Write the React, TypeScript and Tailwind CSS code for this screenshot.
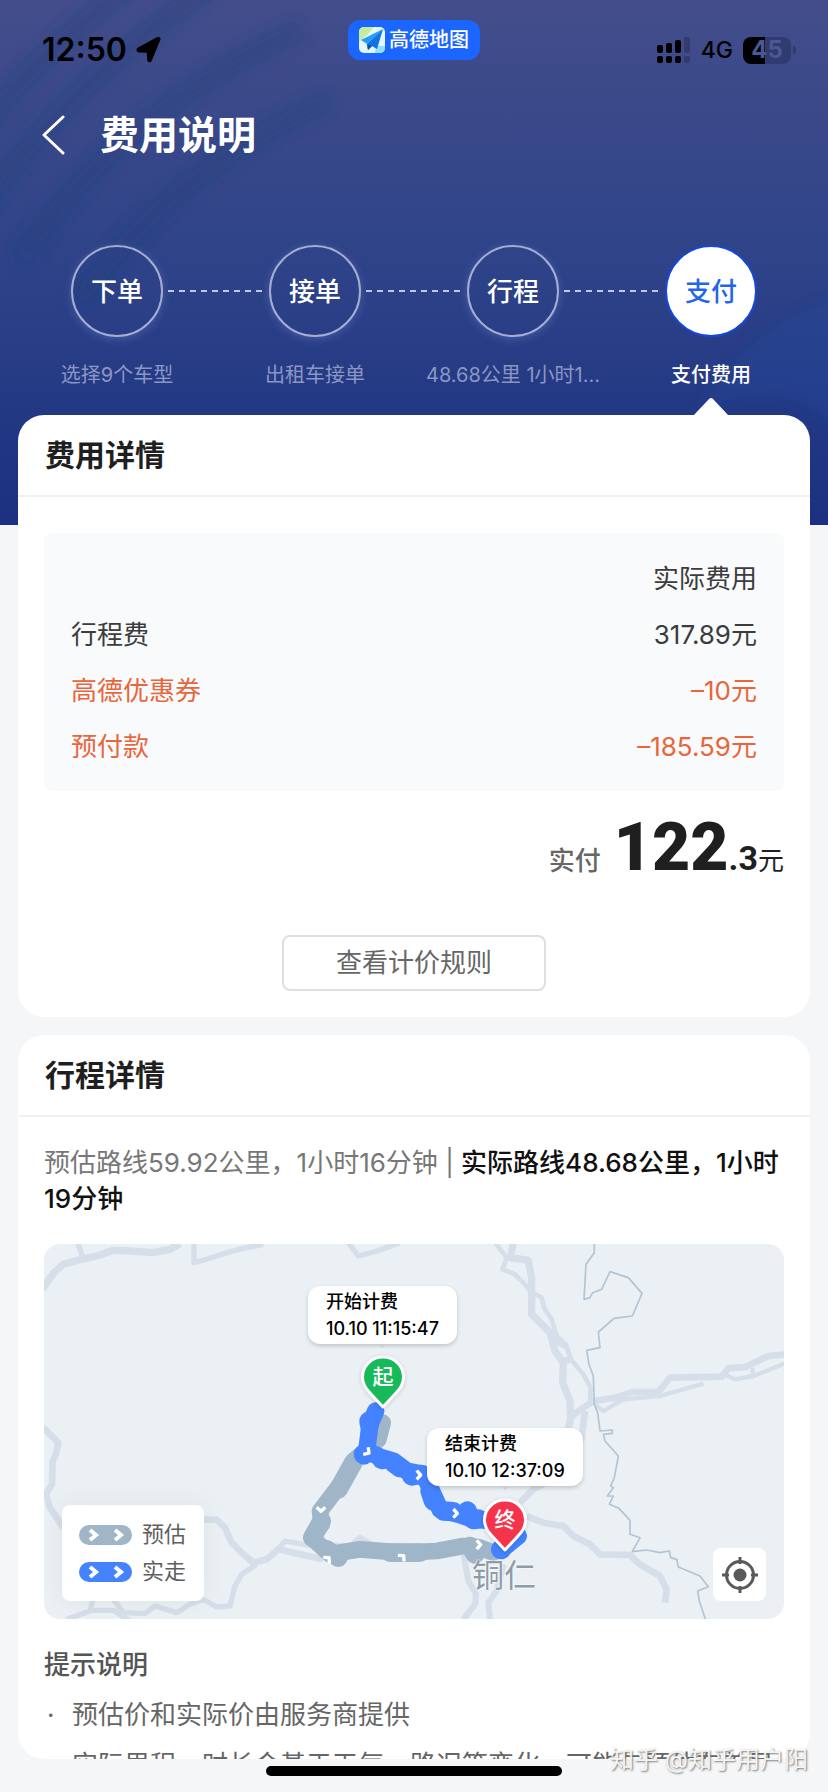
import type { ReactNode } from 'react';
import clsx from 'clsx';

const steps = [
  { name: '下单', note: '选择9个车型' },
  { name: '接单', note: '出租车接单' },
  { name: '行程', note: '48.68公里 1小时1...' },
  { name: '支付', note: '支付费用', active: true },
];

const fees = [
  { label: '行程费', amount: '317.89元' },
  { label: '高德优惠券', amount: '–10元', discount: true },
  { label: '预付款', amount: '–185.59元', discount: true },
];

const tips = ['预估价和实际价由服务商提供', '实际里程、时长会基于天气、路况等变化，可能与预估有差异'];

function StatusBar() {
  return (
    <div className="grid h-20 shrink-0 grid-cols-3 items-center px-8 text-black">
      <div className="flex items-center gap-2 pl-[10px] pt-5">
        <span className="text-[32px] font-semibold leading-8">12:50</span>
        <svg className="size-[26px]" viewBox="0 0 26 26" aria-hidden="true">
          <path d="M24.4 2.6 15.8 23.3c-.6 1.5-2.6 1.2-2.7-.4l-.3-8.2-8.9-.3c-1.700-.1-2-2.200-.5-2.900L22.800.9c1.200-.5 2.100.6 1.600 1.700Z" strokeWidth="2" stroke="#000" strokeLinejoin="round" />
        </svg>
      </div>

      <div className="flex h-10 w-[132px] items-center justify-center gap-1 justify-self-center rounded-xl bg-[#1a66ff]">
        <svg className="size-[26px]" viewBox="0 0 26 26" aria-hidden="true">
          <rect width="26" height="26" rx="5" fill="#e4f7fb" />
          <path d="M0 5a5 5 0 0 1 5-5h10L8 8 0 15Z" fill="#c5ec9b" />
          <path d="M17 19h9v2a5 5 0 0 1-5 5h-5Z" fill="#8fe0fb" />
          <path d="M24 2 2 13l6 4Z" fill="#2a9bf5" />
          <path d="M24 2 8 17l1 6 4-4 5 3Z" fill="#1273e6" />
          <path d="m8 17 1 6 4-4Z" fill="#0a4fb5" />
        </svg>
        <span className="text-xl font-medium leading-6 text-white">高德地图</span>
      </div>

      <div className="flex items-center justify-end gap-[10px] pt-5">
        <svg className="h-[26px] w-[34px]" viewBox="0 0 34 26" aria-hidden="true">
          <g>
            <rect x="0" y="8" width="6" height="8" rx="2" />
            <rect x="9" y="6" width="6" height="10" rx="2" />
            <rect x="18" y="3" width="6" height="13" rx="2" />
            <rect x="0" y="19" width="6" height="7" rx="2" />
            <rect x="9" y="19" width="6" height="7" rx="2" />
            <rect x="18" y="19" width="6" height="7" rx="2" />
          </g>
          <g fillOpacity="0.2">
            <rect x="27" y="0" width="6" height="16" rx="2" />
            <rect x="27" y="19" width="6" height="7" rx="2" />
          </g>
        </svg>
        <span className="text-[23px] font-medium leading-7">4G</span>
        <span className="flex items-center gap-[2px]">
          <span className="flex h-[27px] w-12 items-center justify-center rounded-lg bg-linear-to-r from-black from-45% to-[#2f3b71] to-45% text-2xl font-bold leading-7">
            <span className="text-[#4a5796]">4</span>
            <span className="text-[#4c5892]">5</span>
          </span>
          <span className="h-2 w-[3px] rounded-r-full bg-[#2f3b71]" />
        </span>
      </div>
    </div>
  );
}

function Steps() {
  return (
    <ol className="flex shrink-0 px-[18px] pb-[26px] pt-[55px]">
      {steps.map((step, i) => (
        <li key={step.name} className="relative flex flex-1 flex-col items-center">
          <div
            className={clsx(
              'flex size-[92px] items-center justify-center rounded-full border-2 text-[26px] font-medium',
              step.active
                ? 'border-[#1747d8] bg-white text-[#1f66e8]'
                : 'border-[#a5add3] text-white shadow-[0_2px_10px_rgba(160,180,255,0.25)]'
            )}
          >
            {step.name}
          </div>
          {i < steps.length - 1 && (
            <svg className="absolute left-[calc(50%+51px)] top-[45px] h-[2px] w-[calc(100%-102px)]" aria-hidden="true">
              <line x1="0" y1="1" x2="100%" y2="1" stroke="#c3c8e2" strokeWidth="2" strokeDasharray="6 5" />
            </svg>
          )}
          <p
            className={clsx(
              'mt-6 h-7 whitespace-nowrap text-xl leading-7',
              step.active ? 'font-medium text-white' : 'text-[#8c96c5]'
            )}
          >
            {step.note}
          </p>
        </li>
      ))}
    </ol>
  );
}

function CardTitle({ children }: { children: ReactNode }) {
  return (
    <h2 className="flex h-[82px] shrink-0 items-center border-b-2 border-[#f0f1f2] px-[27px] text-[30px] font-bold text-[#1f1f1f]">
      {children}
    </h2>
  );
}

function FeeCard() {
  return (
    <section className="relative shrink-0 rounded-[26px] bg-white pb-[26px]">
      {/* Pointer to the active step */}
      <svg className="absolute right-[12.5%] top-[-18px] h-[19px] w-9 translate-x-1/2" viewBox="0 0 36 19" aria-hidden="true">
        <path d="M0 19 16 2q2-2 4 0l16 17Z" fill="#fff" />
      </svg>
      <CardTitle>费用详情</CardTitle>

      <div className="mx-[26px] mt-9 rounded-lg bg-[#f9fafb] px-[27px] pb-4 pt-[18px]">
        <table className="w-full text-[26px] text-[#3c3c3c]">
          <thead>
            <tr className="h-14">
              <td />
              <th scope="col" className="p-0 text-right font-normal leading-9">实际费用</th>
            </tr>
          </thead>
          <tbody>
            {fees.map((fee) => (
              <tr key={fee.label} className={clsx('h-14', fee.discount && 'text-[#e8663c]')}>
                <th scope="row" className="p-0 text-left font-normal leading-9">{fee.label}</th>
                <td className="p-0 text-right leading-9">{fee.amount}</td>
              </tr>
            ))}
          </tbody>
        </table>
      </div>

      <p className="flex h-36 items-baseline justify-end px-[26px] pt-[21px] text-[26px] text-[#1f1f1f]">
        <span className="mr-[13px] font-medium text-[#666]">实付</span>
        <span className="font-[Roboto] text-[66px] font-black leading-[72px]">122</span>
        <span className="font-[Roboto] text-[34px] font-bold">.3</span>
        <span>元</span>
      </p>

      <button
        type="button"
        className="mx-auto block h-14 w-[264px] rounded-lg border-2 border-[#dfdfdf] text-[26px] leading-9 text-[#666]"
      >
        查看计价规则
      </button>
    </section>
  );
}

function Pin({ text, color, className }: { text: string; color: string; className: string }) {
  return (
    <div className={clsx('absolute h-[54px] w-[46px] -translate-x-1/2', className)}>
      <svg className="absolute inset-0 size-full drop-shadow-sm" viewBox="0 0 46 54" aria-hidden="true">
        <path
          d="M23 2C11.400 2 2.500 11 2.500 22c0 6.500 3 11.500 7.500 16l13 14 13-14c4.500-4.500 7.500-9.500 7.500-16C43.500 11 34.600 2 23 2Z"
          fill={color}
          stroke="#fff"
          strokeWidth="3"
          strokeLinejoin="round"
        />
      </svg>
      <span className="relative block pt-2 text-center text-[21px] font-medium leading-7 text-white">{text}</span>
    </div>
  );
}

function TimeBubble({ title, time, className }: { title: string; time: string; className: string }) {
  return (
    <div
      className={clsx(
        'absolute rounded-xl bg-white px-[18px] py-[2px] text-lg font-medium leading-[27px] text-black shadow-[0_2px_4px_rgba(0,0,0,0.18)]',
        className
      )}
    >
      <p className="whitespace-nowrap">{title}</p>
      <p className="whitespace-nowrap">{time}</p>
      <i className="absolute -bottom-1 left-1/2 size-0 -translate-x-1/2 border-x-4 border-t-4 border-x-transparent border-t-[#c9ced2]" />
    </div>
  );
}

function Arrow({ x, y, rotate = 0 }: { x: number; y: number; rotate?: number }) {
  return (
    <path
      d="M-6-13 6 0-6 13"
      transform={`translate(${x} ${y}) rotate(${rotate})`}
      fill="none"
      stroke="#fff"
      strokeWidth="10"
    />
  );
}

function MapDrawing() {
  return (
    <svg
      className="absolute inset-0 size-full"
      viewBox="0 0 2220 1125"
      preserveAspectRatio="xMidYMid slice"
      fill="none"
      strokeLinejoin="round"
      aria-hidden="true"
    >
      {/* Roads, west side */}
      <g transform="translate(-42 -39)" stroke="#d6deea" strokeWidth="16">
        <path d="M36 175 72 125 100 100 155 85 200 75 250 58 300 60 370 65 420 55 450 38" strokeWidth="22" />
        <path d="M142 30 160 85M492 30V95L530 85 580 68 640 52 700 40M955 35 985 75 1040 60 1110 35" />
        <path d="M40 590 85 635 78 670 68 690 66 760 48 790 60 830 100 890" strokeWidth="20" />
        <path d="M515 866H560L585 890 605 935 640 970 670 995 710 985 745 955 790 965 880 985" strokeWidth="20" />
        <path d="M680 1000 635 1030 615 1065 600 1125 560 1128 520 1105 480 1120 440 1145 375 1125 345 1148 280 1145 250 1105" />
        <path d="M740 960 765 930 830 942 960 945 990 920 1030 942 1200 950M190 1100 180 1140 110 1165M180 1138H250L300 1170" />
      </g>
      {/* Roads, east side */}
      <g transform="translate(1068 -39)" stroke="#d6deea" strokeWidth="16">
        <path d="M285 35 320 80 308 115 345 130 375 160 395 185 425 200 432 230 455 265 470 315 500 345 512 385 550 430 572 470 570 510" strokeWidth="14" />
        <path d="M340 35 332 80 385 88 395 140V250L450 305 465 360 490 395 488 455 510 510 512 560 500 620" strokeWidth="22" />
        <path d="M465 330 500 345M490 390 515 385M510 560 550 530 580 510 650 500 695 483H775L810 440 965 437 985 412 1035 408 1105 375 1160 370" strokeWidth="20" />
        <path d="M585 520 610 540 670 505 780 495 910 458M970 430 1005 445 1060 435 1160 395M1058 410V435" strokeWidth="13" />
        <path d="M555 540 545 620 500 720 400 775 360 815" strokeWidth="20" />
        <path d="M380 855 430 875 490 885 520 915 570 940 600 970 690 972 720 1000 780 1035 800 1075 795 1115" strokeWidth="20" />
        <path d="M190 965 205 1050 228 1090 225 1120 190 1165M310 1000 290 1080 265 1115 270 1165" strokeWidth="18" />
      </g>
      {/* District border */}
      <path
        transform="translate(1068 -39)"
        d="M583 35V65L558 100 552 205 570 200 578 185 605 175 630 122 685 140 726 187 697 255 642 262 595 303 600 350 560 358 567 400 580 435 583 520 593 545 600 600 637 597V607L610 610 615 630 655 675 643 740 632 765 640 770 622 795 640 795 628 820 657 832 690 868V910L720 920 697 962 740 957 780 965 808 960 812 980 830 985 835 1008 900 1035 925 1067 893 1080 898 1110 918 1170"
        stroke="#b3c4d2"
        strokeWidth="5"
      />
      {/* Estimated and driven routes */}
      <g transform="translate(738 291)">
        <g stroke="#9fb5c8" strokeLinecap="round">
          <path d="M278 245 265 295 190 360 155 425 90 510 95 550 65 590 120 640 210 625 330 635 440 630 520 615 565 618 610 635" strokeWidth="50" />
          <path d="M190 365 145 445M95 540 67 590M110 625 145 650M300 635H390M540 615 555 640" strokeWidth="56" />
        </g>
        <g stroke="#4482ff" strokeLinecap="round">
          <path d="M257 210 240 250 230 330 270 348 310 360 350 390 400 400 425 450 450 505 505 520 550 535 620 540 685 585 632 628" strokeWidth="52" />
          <path d="M237 240 238 250M220 340 222 342M275 355 278 356M310 365 330 380M365 405 395 400M420 450 430 480M460 510 490 512M532 510 535 520M550 536 565 534M632 625 634 626" strokeWidth="58" />
        </g>
        <Arrow x={232} y={333} rotate={35} />
        <Arrow x={386} y={402} />
        <Arrow x={496} y={517} />
        <Arrow x={566} y={611} />
        <Arrow x={93} y={505} rotate={90} />
        <Arrow x={113} y={654} rotate={-45} />
        <Arrow x={337} y={648} rotate={-45} />
      </g>
    </svg>
  );
}

function LegendItem({ label, color }: { label: string; color: string }) {
  return (
    <li className="flex items-center gap-[10px] text-[22px] leading-[37px] text-[#5f5f5f]">
      <svg className="h-5 w-[53px]" viewBox="0 0 53 20" fill="none" aria-hidden="true">
        <rect width="53" height="20" rx="10" fill={color} />
        <path d="m11 5 6 5-6 5M36 5l6 5-6 5" stroke="#fff" strokeWidth="4" />
      </svg>
      {label}
    </li>
  );
}

function TripMap() {
  return (
    <div className="relative mt-[27px] h-[375px] shrink-0 overflow-hidden rounded-2xl bg-[#eaf0f4]">
      <MapDrawing />
      <span className="absolute left-[428px] top-[312px] text-[32px] leading-10 text-[#8f9ba8] [text-shadow:0_0_2px_#fff,0_0_2px_#fff]">
        铜仁
      </span>
      <Pin text="起" color="#18b95a" className="left-[339px] top-[111px]" />
      <Pin text="终" color="#f5344c" className="left-[461px] top-[254px]" />
      <TimeBubble title="开始计费" time="10.10 11:15:47" className="left-[264px] top-[42px]" />
      <TimeBubble title="结束计费" time="10.10 12:37:09" className="left-[383px] top-[184px]" />

      <ul className="absolute bottom-[18px] left-[18px] rounded-lg bg-white py-[11px] pl-[17px] pr-[18px] shadow-[0_0_24px_rgba(0,0,0,0.06)]">
        <LegendItem label="预估" color="#9fb5c8" />
        <LegendItem label="实走" color="#4482ff" />
      </ul>

      <button
        type="button"
        aria-label="定位"
        className="absolute bottom-[18px] right-[18px] flex size-[53px] items-center justify-center rounded-lg bg-white"
      >
        <svg className="size-9" viewBox="0 0 36 36" fill="none" stroke="#5a5a5a" aria-hidden="true">
          <circle cx="18" cy="18" r="13.500" strokeWidth="3" />
          <circle cx="18" cy="18" r="6.500" fill="#5a5a5a" stroke="none" />
          <path d="M18 0v7M18 29v7M0 18h7M29 18h7" strokeWidth="3" />
        </svg>
      </button>
    </div>
  );
}

function TripCard() {
  return (
    <section className="flex min-h-0 flex-1 flex-col overflow-hidden rounded-[26px] bg-white">
      <CardTitle>行程详情</CardTitle>
      <div className="px-[26px] pt-7">
        <p className="text-[26px] leading-9 text-[#777]">
          预估路线59.92公里，1小时16分钟 |{' '}
          <strong className="font-medium text-[#111]">实际路线48.68公里，1小时19分钟</strong>
        </p>
        <TripMap />
        <h3 className="mt-7 text-[26px] font-medium leading-9 text-[#555]">提示说明</h3>
        <ul className="text-[26px] leading-9 text-[#666]">
          {tips.map((tip) => (
            <li key={tip} className="mt-[14px] flex whitespace-nowrap">
              <span className="w-7 pl-[3px]">·</span>
              {tip}
            </li>
          ))}
        </ul>
      </div>
    </section>
  );
}

export default function App() {
  return (
    <div className="relative isolate flex h-screen flex-col overflow-hidden bg-[#f5f6f8] font-[Inter,'Noto_Sans_CJK_SC',sans-serif]">
      {/* Header backdrop */}
      <div className="absolute inset-x-0 top-0 -z-10 h-[525px] overflow-hidden bg-linear-to-b from-[#434d8b] via-[#2e4388] to-[#1b3080]">
        <svg className="size-full" viewBox="0 0 828 525" preserveAspectRatio="none" fill="none" aria-hidden="true">
          <defs>
            <filter id="soften">
              <feGaussianBlur stdDeviation="8" />
            </filter>
          </defs>
          <g filter="url(#soften)" stroke="#1c3f78" strokeOpacity="0.4" strokeWidth="16">
            <path d="M-20 130Q50 40 140-20M-20 210Q70 80 220-20M20 260Q120 110 300 30M80 300Q170 170 330 100" />
          </g>
          <path d="M700 410Q790 370 850 440V300Q760 310 700 410Z" fill="#1d4da8" fillOpacity="0.25" filter="url(#soften)" />
        </svg>
      </div>

      <StatusBar />
      <header className="flex h-[110px] shrink-0 items-center gap-[34px] pl-[42px] text-white">
        <button type="button" aria-label="返回">
          <svg className="h-10 w-6" viewBox="0 0 24 40" fill="none" stroke="currentColor" strokeWidth="3" strokeLinecap="round" strokeLinejoin="round" aria-hidden="true">
            <path d="M21 2 2 20l19 18" />
          </svg>
        </button>
        <h1 className="text-[39px] font-bold leading-[48px]">费用说明</h1>
      </header>
      <Steps />

      <main className="flex min-h-0 flex-1 flex-col gap-[18px] px-[18px]">
        <FeeCard />
        <TripCard />
      </main>

      <footer className="flex h-[33px] shrink-0 justify-center pt-[7px]">
        <div className="h-[10px] w-[296px] rounded-full bg-black" />
      </footer>
      <span className="absolute bottom-[18px] right-5 text-2xl leading-7 text-[#f4f4f4] [text-shadow:1px_1px_2px_#777]">
        知乎 @知乎用户阳
      </span>
    </div>
  );
}
